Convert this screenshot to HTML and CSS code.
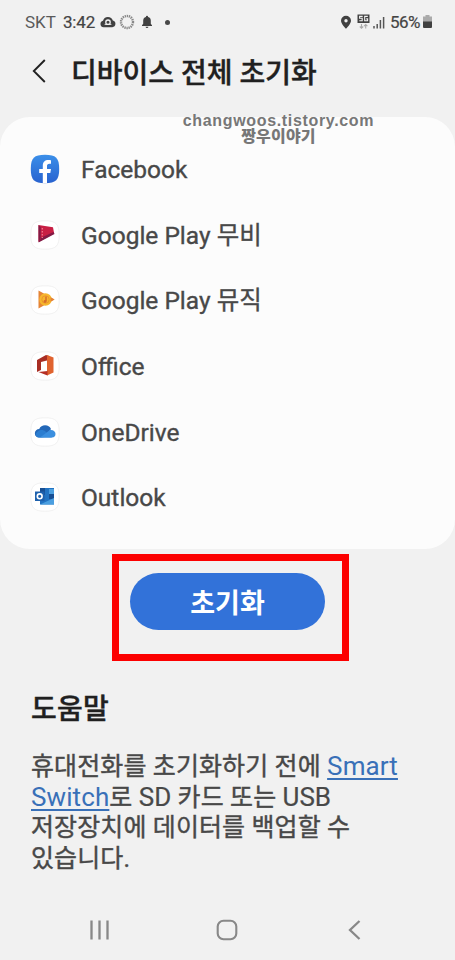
FILE: index.html
```html
<!DOCTYPE html>
<html lang="ko">
<head>
<meta charset="utf-8">
<meta name="viewport" content="width=device-width, initial-scale=1">
<title>디바이스 전체 초기화</title>
<link rel="stylesheet" href="styles.css">
</head>
<body>
<div class="screen">
  <div class="status">
    <span class="carrier">SKT</span>
    <span class="time">3:42</span>
    <svg class="s-cloud" width="16" height="12" viewBox="0 0 16 12"><path fill="#414141" d="M3.6 11.2A3.3 3.3 0 0 1 3 4.7 5.1 5.1 0 0 1 12.8 4.5a3.4 3.4 0 0 1-.5 6.7z"/><circle cx="8" cy="6.2" r="2.2" fill="none" stroke="#f1f1f1" stroke-width="1.3"/><path d="M4.6 8.4h6.8" stroke="#f1f1f1" stroke-width=".9"/></svg>
    <svg class="s-ring" width="16" height="16" viewBox="0 0 16 16"><circle cx="8" cy="8" r="6" fill="none" stroke="#888" stroke-width="2.4" stroke-dasharray="1.35 .75"/></svg>
    <svg class="s-bell" width="12" height="14" viewBox="0 0 12 14"><path fill="#414141" d="M6 .8a1.1 1.1 0 0 1 1.1 1.1A3.8 3.8 0 0 1 9.8 5.6v3.2L11 10.2v.8H1v-.8l1.200-1.400V5.600A3.800 3.800 0 0 1 4.900 1.900 1.100 1.100 0 0 1 6 .8zM4.600 11.700h2.800a1.400 1.400 0 0 1-2.800 0z"/></svg>
    <i class="s-dot"></i>
    <span class="grow"></span>
    <svg class="s-pin" width="12" height="15" viewBox="0 0 12 15"><path fill="#414141" fill-rule="evenodd" d="M6 .8a5 5 0 0 1 5 5C11 9 6 13.800 6 13.800S1 9 1 5.800a5 5 0 0 1 5-5zm0 3.200a1.700 1.700 0 1 0 0 3.400 1.700 1.700 0 0 0 0-3.400z"/></svg>
    <svg class="s-5g" width="13" height="16" viewBox="0 0 13 16"><path fill="#414141" d="M.5.500h12v8.500H.5z"/><path d="M5.700 2.400H2.600v1.900h2.600v2.500H2.300M10.800 2.400H7.700v4.400h2.900V4.900H9.200" fill="none" stroke="#f1f1f1" stroke-width="1.100"/><path d="M4.500 10v4M2.800 12.500l1.700 1.700 1.700-1.700M8.700 14.500v-4M7 12.200l1.700-1.700 1.700 1.700" fill="none" stroke="#aaa" stroke-width="1.100"/></svg>
    <svg class="s-signal" width="12" height="13" viewBox="0 0 12 13"><path d="M1 10v2.500M4.200 8v4.500M7.400 4v8.500M10.600 1v11.500" stroke="#555" stroke-width="1.500"/></svg>
    <span class="pct">56%</span>
    <svg class="s-bat" width="9" height="14" viewBox="0 0 9 14"><path fill="#aaa" d="M2.500 0h4v1.500H9V7H0V1.500h2.500z"/><path fill="#414141" d="M0 6.500h9V12a1 1 0 0 1-1 1H1a1 1 0 0 1-1-1z"/></svg>
  </div>

  <header class="header">
    <svg width="16" height="26" viewBox="0 0 16 26"><path d="M13.800 2 2.800 13l11 11" fill="none" stroke="#222" stroke-width="1.900"/></svg>
    <h1>디바이스 전체 초기화</h1>
  </header>

  <main class="card">
    <div class="watermark"><span>changwoos.tistory.com</span><b>짱우이야기</b></div>
    <div class="row">
      <svg class="app" viewBox="0 0 30 30"><defs><linearGradient id="fb" x2="0" y2="1"><stop stop-color="#3b8fe9"/><stop offset="1" stop-color="#2862cf"/></linearGradient></defs><path fill="url(#fb)" d="M15 .8C26 .8 29.200 4 29.200 15S26 29.200 15 29.200.8 26 .8 15 4 .8 15 .8z"/><path fill="#fff" d="M12.800 29.200V19H9.200v-4h3.600v-3.200c0-3.800 2.200-5.800 5.500-5.800 1 0 2.200.200 2.700.300v3.500h-1.500c-1.900 0-2.500 1-2.500 2.200v3h4l-.700 4H17v10.200z"/></svg>
      <span>Facebook</span>
    </div>
    <div class="row">
      <svg class="app" viewBox="0 0 30 30"><path class="tile" d="M15 .8C26 .8 29.200 4 29.200 15S26 29.200 15 29.200.8 26 .8 15 4 .8 15 .8z"/><path fill="#c81f44" d="M8.500 5 23 7.200l1.200 6.300L8.500 22z"/><path fill="#831a45" d="M8.500 5l2.200 2v12l-2.200 3zM8.500 22.500l16-8.500-1-2-13 6z"/><path d="M12.300 8v10" stroke="#f07b91" stroke-width="1.200" stroke-dasharray="1.500 1.500"/></svg>
      <span>Google Play 무비</span>
    </div>
    <div class="row">
      <svg class="app" viewBox="0 0 30 30"><path class="tile" d="M15 .8C26 .8 29.200 4 29.200 15S26 29.200 15 29.200.8 26 .8 15 4 .8 15 .8z"/><path fill="#e58436" d="M8.500 5.500 24.500 14.500 8.500 23.500z"/><circle cx="15.500" cy="14.500" r="6.200" fill="#f6b62c"/><path fill="#e58436" d="m20.500 12.200 4 2.300-4 2.300z"/><circle cx="15.500" cy="14.500" r="3.700" fill="none" stroke="#ed962b"/><path d="M16 11.500v5" stroke="#d66d29" stroke-width="1.500"/><circle cx="15" cy="16.500" r="1.400" fill="#d66d29"/></svg>
      <span>Google Play 뮤직</span>
    </div>
    <div class="row">
      <svg class="app" viewBox="0 0 30 30"><path class="tile" d="M15 .8C26 .8 29.200 4 29.200 15S26 29.200 15 29.200.8 26 .8 15 4 .8 15 .8z"/><path fill="#a82e24" d="M7 9 16 4l3 1v4l-8 2v8L7 21z"/><path fill="#e0632f" d="m17 4 6.500 2.500v15L17 24.500z"/><path fill="#b52f26" d="m8.500 21 9-1v4.500z"/></svg>
      <span>Office</span>
    </div>
    <div class="row">
      <svg class="app" viewBox="0 0 30 30"><path class="tile" d="M15 .8C26 .8 29.200 4 29.200 15S26 29.200 15 29.200.8 26 .8 15 4 .8 15 .8z"/><path fill="#2468b8" d="M9 20.500a4.200 4.200 0 0 1 .2-8.500A6.500 6.500 0 0 1 21 12l-6 8z"/><path fill="#2b7dd0" d="M5.500 18.500c1-5.500 7-7 10-4l6.500 6H9.200a4 4 0 0 1-3.700-2z"/><path fill="#3b8fdf" d="m10 20.500 10-7.500c3.500-.4 5.500 1.600 5.500 4a3.600 3.600 0 0 1-3.500 3.500z"/></svg>
      <span>OneDrive</span>
    </div>
    <div class="row">
      <svg class="app" viewBox="0 0 30 30"><path class="tile" d="M15 .8C26 .8 29.200 4 29.200 15S26 29.200 15 29.200.8 26 .8 15 4 .8 15 .8z"/><path fill="#2273c2" d="M10 6h14v16.500H10z"/><path fill="#174f94" d="M10 6h5v7h-5zM19 12h5v5h-5z"/><path fill="#4b9fe0" d="M19 7h5v5h-5zM10 22.500l14-6.500v6.500z"/><path fill="#1e61ad" d="M5 9.500h9.500v9.500H5z"/><circle cx="9.700" cy="14.300" r="2.400" fill="none" stroke="#fff" stroke-width="1.600"/></svg>
      <span>Outlook</span>
    </div>
  </main>

  <div class="highlight"><button class="reset">초기화</button></div>

  <section class="help">
    <h2>도움말</h2>
    <p>휴대전화를 초기화하기 전에 <a>Smart</a><br><a>Switch</a>로 <span class="latin">SD</span> 카드 또는 <span class="latin">USB</span><br>저장장치에 데이터를 백업할 수<br>있습니다.</p>
  </section>

  <nav class="nav">
    <svg width="22" height="22" viewBox="0 0 22 22"><path d="M2.500 1.500v19M10.500 1.500v19M18.500 1.500v19" stroke="#888" stroke-width="2.300"/></svg>
    <svg width="22" height="22" viewBox="0 0 22 22"><rect x="1.700" y="1.700" width="18.600" height="18.600" rx="5.800" fill="none" stroke="#888" stroke-width="2.100"/></svg>
    <svg width="22" height="22" viewBox="0 0 22 22"><path d="M16.500 2 7 11l9.500 9" fill="none" stroke="#888" stroke-width="2.300"/></svg>
  </nav>
</div>
</body>
</html>
```
FILE: styles.css
```css
* { box-sizing: border-box; }
body {
  margin: 0;
  background: #f1f1f1;
  color: #484848;
  font-family: Roboto, "Noto Sans CJK KR", sans-serif;
}
svg { display: block; flex: none; }
.screen {
  width: 455px;
  height: 960px;
  display: flex;
  flex-direction: column;
  overflow: hidden;
}
.status {
  height: 44px;
  flex: none;
  display: flex;
  align-items: center;
  padding: 0 23px 0 25px;
  font-size: 17px;
  line-height: 20px;
  color: #444;
}
.carrier { width: 38px; color: #5a5a5a; }
.time { width: 38px; letter-spacing: -.2px; -webkit-text-stroke: .2px currentColor; }
.s-cloud { margin-left: -1px; }
.s-ring { margin-left: 3px; }
.s-bell { margin-left: 6px; }
.s-dot { width: 5px; height: 5px; margin-left: 12px; border-radius: 50%; background: #484848; }
.grow { flex: 1; }
.s-pin { margin-right: -1px; }
.s-5g { margin-left: 6px; }
.s-signal { margin-left: 3px; }
.pct { width: 33px; margin-left: 5px; letter-spacing: -.5px; -webkit-text-stroke: .2px currentColor; }
.header {
  height: 73px;
  flex: none;
  display: flex;
  align-items: flex-start;
  padding: 14px 0 0 31px;
}
.header h1 {
  margin: 2px 0 0 24px;
  font-size: 28px;
  line-height: 28px;
  font-weight: 500;
  color: #202020;
  -webkit-text-stroke: .4px currentColor;
  white-space: nowrap;
}
.card {
  position: relative;
  height: 432px;
  flex: none;
  padding-top: 19px;
  border-radius: 30px;
  background: #fcfcfc;
}
.watermark {
  position: absolute;
  top: -4px;
  left: 183px;
  width: 191px;
  display: flex;
  flex-direction: column;
  align-items: center;
  font: bold 16px/16px "Liberation Sans", "Noto Sans CJK KR", sans-serif;
  letter-spacing: .66px;
  color: #777;
}
.watermark b { font-size: 16px; line-height: 13px; letter-spacing: .2px; font-family: "Noto Sans CJK KR", sans-serif; }
.row {
  height: 65.7px;
  display: flex;
  align-items: center;
  padding-left: 30px;
  font-size: 24.5px;
  line-height: 30px;
  white-space: nowrap;
}
.row span { padding-top: 2px; -webkit-text-stroke: .35px currentColor; }
.app { width: 30px; height: 30px; margin-right: 21px; }
.tile { fill: #fff; stroke: #ededed; stroke-width: .8; }
.highlight {
  width: 237px;
  height: 107px;
  flex: none;
  margin: 5px 0 0 112px;
  padding: 12px 11px;
  border: 7px solid #fc0000;
}
.reset {
  display: block;
  width: 195px;
  height: 57px;
  padding: 0;
  border: 0;
  border-radius: 29px;
  background: #3272d9;
  color: #fff;
  font: 700 27px/57px "Noto Sans CJK KR", sans-serif;
}
.help { flex: 1; padding: 33px 0 0 31px; }
.help h2 {
  margin: 0;
  font-size: 28px;
  line-height: 32px;
  font-weight: 500;
  letter-spacing: .3px;
  color: #202020;
  -webkit-text-stroke: .4px currentColor;
}
.help p {
  margin: 26px 0 0;
  font-size: 25px;
  line-height: 30.5px;
  letter-spacing: .1px;
  -webkit-text-stroke: .4px currentColor;
  white-space: nowrap;
}
.help a { color: #3970b8; text-decoration: underline; text-decoration-thickness: 1.5px; text-underline-offset: 3px; -webkit-text-stroke: 0; }
.help a, .latin { font-size: 26px; line-height: 1; }
.latin { letter-spacing: 0; -webkit-text-stroke: .2px currentColor; }
.nav {
  height: 60px;
  flex: none;
  display: flex;
  justify-content: space-between;
  align-items: center;
  padding: 0 90px 0 89px;
}
```
